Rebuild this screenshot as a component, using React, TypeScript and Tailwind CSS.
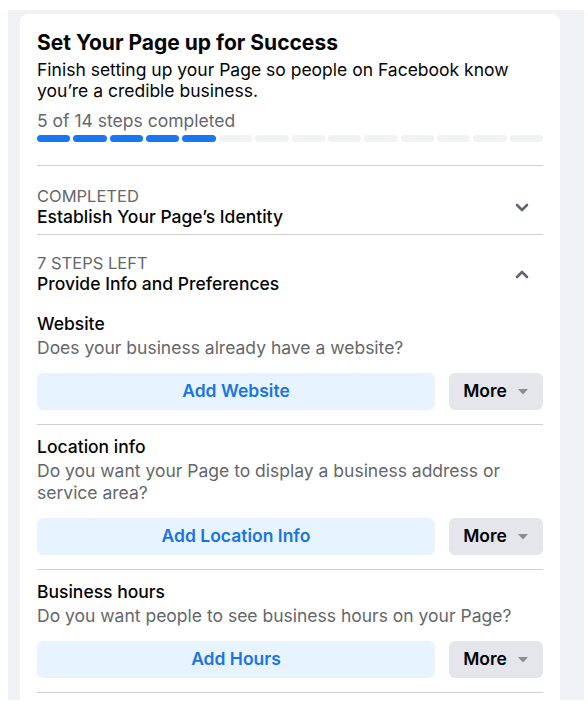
import React from "react";

const TOTAL = 14;
const DONE = 5;

function ChevronDown() {
  return (
    <svg width="14" height="9" viewBox="0 0 14 9" fill="none">
      <path d="M2 2l5 5 5-5" stroke="#606770" strokeWidth="2.6" strokeLinecap="round" strokeLinejoin="round" />
    </svg>
  );
}

function ChevronUp() {
  return (
    <svg width="14" height="9" viewBox="0 0 14 9" fill="none">
      <path d="M2 7l5-5 5 5" stroke="#606770" strokeWidth="2.6" strokeLinecap="round" strokeLinejoin="round" />
    </svg>
  );
}

function Caret() {
  return (
    <svg width="12" height="7" viewBox="0 0 12 7">
      <path d="M1 1h10L6 6.5z" fill="#8a8d91" />
    </svg>
  );
}

function Step({
  title,
  desc,
  action,
}: {
  title: string;
  desc: string;
  action: string;
}) {
  return (
    <div className="border-b border-[#ced0d4] pt-[11px] pb-[14px]">
      <div className="text-[17.5px] leading-[22px] font-medium text-[#050505]">{title}</div>
      <div className="mt-[2px] text-[17.5px] leading-[22px] text-[#65676b]">{desc}</div>
      <div className="mt-[14px] flex gap-[14px]">
        <button className="flex-1 h-[37px] rounded-md bg-[#e7f3ff] text-[17.5px] font-semibold text-[#1b74e4]">
          {action}
        </button>
        <button className="w-[94px] h-[37px] rounded-md bg-[#e4e6eb] flex items-center justify-center gap-[10px] text-[17.5px] font-semibold text-[#050505]">
          More
          <Caret />
        </button>
      </div>
    </div>
  );
}

export default function App() {
  return (
    <div
      className="w-[588px] h-[716px] bg-white pt-[10px] pl-[8px]"
      style={{ fontFamily: "Inter, 'Liberation Sans', sans-serif" }}
    >
      <div className="w-[576px] h-[690px] bg-[#f0f2f5] pt-[4px] pl-[12px]">
        <div className="w-[540px] h-full bg-white rounded-t-lg overflow-hidden px-[17px] pt-[17px]">
          <div className="text-[21px] leading-[24px] font-bold text-[#050505]">
            Set Your Page up for Success
          </div>
          <div className="mt-[4px] text-[17.5px] leading-[21px] text-[#050505]">
            Finish setting up your Page so people on Facebook know you’re a credible business.
          </div>
          <div className="mt-[9px] text-[17.5px] leading-[21px] text-[#65676b]">
            5 of {TOTAL} steps completed
          </div>
          <div className="mt-[4px] flex gap-[3px]">
            {Array.from({ length: TOTAL }).map((_, i) => (
              <div
                key={i}
                className={
                  "flex-1 h-[7px] rounded-full " + (i < DONE ? "bg-[#1877f2]" : "bg-[#f0f2f5]")
                }
              />
            ))}
          </div>

          <div className="mt-[23px] border-t border-[#ced0d4]" />

          <div className="flex items-center justify-between pt-[20px] pb-[6px] border-b border-[#ced0d4]">
            <div>
              <div className="text-[16.5px] leading-[20px] text-[#65676b]">COMPLETED</div>
              <div className="text-[17.5px] leading-[22px] font-medium text-[#050505]">
                Establish Your Page’s Identity
              </div>
            </div>
            <div className="mr-[14px]">
              <ChevronDown />
            </div>
          </div>

          <div className="flex items-center justify-between pt-[18px] pb-[7px]">
            <div>
              <div className="text-[16.5px] leading-[20px] text-[#65676b]">7 STEPS LEFT</div>
              <div className="text-[17.5px] leading-[22px] font-medium text-[#050505]">
                Provide Info and Preferences
              </div>
            </div>
            <div className="mr-[14px]">
              <ChevronUp />
            </div>
          </div>

          <Step
            title="Website"
            desc="Does your business already have a website?"
            action="Add Website"
          />
          <Step
            title="Location info"
            desc="Do you want your Page to display a business address or service area?"
            action="Add Location Info"
          />
          <Step
            title="Business hours"
            desc="Do you want people to see business hours on your Page?"
            action="Add Hours"
          />
        </div>
      </div>
    </div>
  );
}
